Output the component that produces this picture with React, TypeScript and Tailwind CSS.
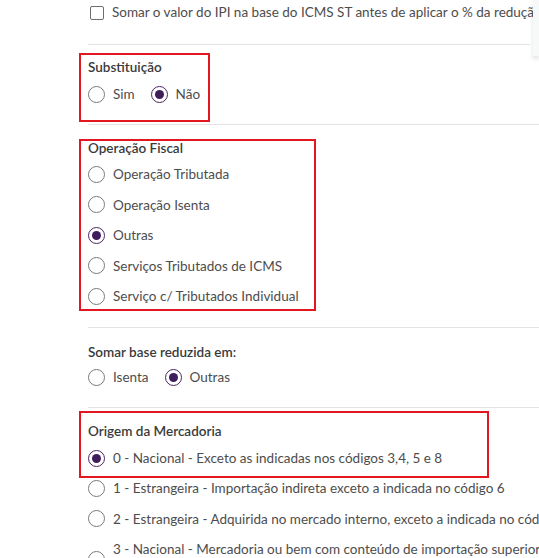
import { useState } from 'react';

type Option = { value: string; label: string };

function Radio({ checked, label, onClick }: { checked: boolean; label: string; onClick: () => void }) {
  return (
    <label onClick={onClick} className="flex items-center gap-[8px] cursor-pointer">
      <span
        className={`flex h-[17px] w-[17px] shrink-0 items-center justify-center rounded-full border ${
          checked ? 'border-[#4a2763] border-[1.5px]' : 'border-[#7a7a7a]'
        } bg-white`}
      >
        {checked && <span className="h-[9px] w-[9px] rounded-full bg-[#3f1d5c]" />}
      </span>
      <span className="leading-[20px]">{label}</span>
    </label>
  );
}

function RadioGroup({
  options,
  value,
  onChange,
  inline,
}: {
  options: Option[];
  value: string;
  onChange: (v: string) => void;
  inline?: boolean;
}) {
  return (
    <div className={inline ? 'flex items-center gap-[16px]' : 'flex flex-col gap-[10.5px]'}>
      {options.map((o) => (
        <Radio key={o.value} checked={value === o.value} label={o.label} onClick={() => onChange(o.value)} />
      ))}
    </div>
  );
}

const operacoes: Option[] = [
  { value: 'tributada', label: 'Operação Tributada' },
  { value: 'isenta', label: 'Operação Isenta' },
  { value: 'outras', label: 'Outras' },
  { value: 'servicos', label: 'Serviços Tributados de ICMS' },
  { value: 'individual', label: 'Serviço c/ Tributados Individual' },
];

const origens: Option[] = [
  { value: '0', label: '0 - Nacional - Exceto as indicadas nos códigos 3,4, 5 e 8' },
  { value: '1', label: '1 - Estrangeira - Importação indireta exceto a indicada no código 6' },
  { value: '2', label: '2 - Estrangeira - Adquirida no mercado interno, exceto a indicada no código 7' },
  {
    value: '3',
    label: '3 - Nacional - Mercadoria ou bem com conteúdo de importação superior a 40% e inferior ou igual a 70%',
  },
];

export default function App() {
  const [somarIpi, setSomarIpi] = useState(false);
  const [substituicao, setSubstituicao] = useState('nao');
  const [operacao, setOperacao] = useState('outras');
  const [baseReduzida, setBaseReduzida] = useState('outras');
  const [origem, setOrigem] = useState('0');

  return (
    <div className="relative h-[558px] w-[539px] overflow-hidden bg-white font-['Lato',sans-serif] text-[13.5px] text-[#4d4d4d]">
      {/* painel lateral cortado */}
      <div className="absolute right-0 top-0 h-[56px] w-[6px] bg-[#f6f9f8] shadow-[0_3px_4px_rgba(0,0,0,0.12)]" />

      <div className="w-[640px] pl-[88px]">
        <div className="flex h-[25px] items-center gap-[8px] pl-[2px]">
          <button
            type="button"
            onClick={() => setSomarIpi(!somarIpi)}
            className="h-[14px] w-[14px] shrink-0 rounded-[2px] border border-[#6e6e6e] bg-white"
          />
          <span className="whitespace-nowrap">Somar o valor do IPI na base do ICMS ST antes de aplicar o % da redução da base de cálculo</span>
        </div>

        <div className="mt-[19px] w-[442px] border-t border-[#e3e3e3]" />

        <div className="mt-[8px] -ml-[9px] w-[131px] border-2 border-[#e3171f] pl-[7px] pt-[2px] pb-[16px]">
          <div className="font-semibold leading-[20px] text-[#3a3a3a]">Substituição</div>
          <div className="mt-[7px]">
            <RadioGroup
              inline
              value={substituicao}
              onChange={setSubstituicao}
              options={[
                { value: 'sim', label: 'Sim' },
                { value: 'nao', label: 'Não' },
              ]}
            />
          </div>
        </div>

        <div className="mt-[2px] border-t border-[#e3e3e3]" />

        <div className="mt-[14px] -ml-[9px] w-[237px] border-2 border-[#e3171f] pl-[7px] pb-[3px]">
          <div className="font-semibold leading-[14px] text-[#3a3a3a]">Operação Fiscal</div>
          <div className="mt-[9px]">
            <RadioGroup value={operacao} onChange={setOperacao} options={operacoes} />
          </div>
        </div>

        <div className="mt-[16px] border-t border-[#e3e3e3]" />

        <div className="mt-[14px] font-semibold leading-[20px] text-[#3a3a3a]">Somar base reduzida em:</div>
        <div className="mt-[5px]">
          <RadioGroup
            inline
            value={baseReduzida}
            onChange={setBaseReduzida}
            options={[
              { value: 'isenta', label: 'Isenta' },
              { value: 'outras', label: 'Outras' },
            ]}
          />
        </div>

        <div className="mt-[20px] border-t border-[#e3e3e3]" />

        <div className="mt-[3px] -ml-[9px] w-[410px] border-2 border-[#e3171f] pl-[7px] pt-[11px] pb-[8px]">
          <div className="font-semibold leading-[14px] text-[#3a3a3a]">Origem da Mercadoria</div>
          <div className="mt-[10px]">
            <Radio checked={origem === '0'} label={origens[0].label} onClick={() => setOrigem('0')} />
          </div>
        </div>

        <div className="flex w-[540px] flex-col gap-[10.5px]">
          {origens.slice(1).map((o) => (
            <Radio key={o.value} checked={origem === o.value} label={o.label} onClick={() => setOrigem(o.value)} />
          ))}
        </div>
      </div>
    </div>
  );
}
